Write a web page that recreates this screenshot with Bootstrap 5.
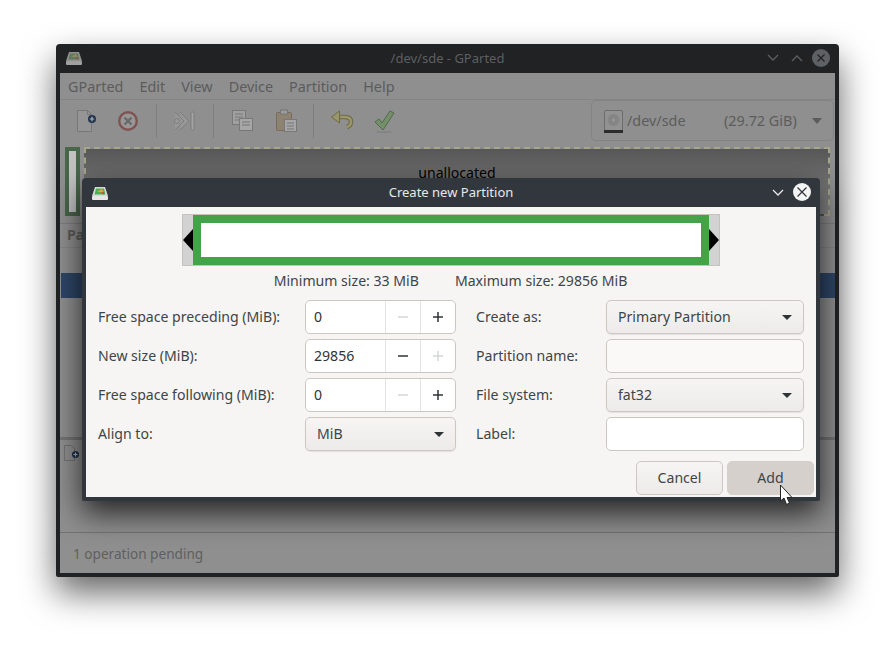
<!DOCTYPE html>
<html lang="en">
<head>
  <meta charset="UTF-8" />
  <title>Create new Partition - GParted</title>
  <link href="https://cdn.jsdelivr.net/npm/bootstrap@5.3.0/dist/css/bootstrap.min.css" rel="stylesheet" />
  <style>
    body { background: #fff; font-family: "Noto Sans", sans-serif; font-size: 14.1px; overflow: hidden; }
    .desk { position: relative; width: 895px; height: 645px; }

    /* main window, dimmed while the dialog is open */
    .main-win { position: absolute; left: 56px; top: 44px; width: 783px; height: 533px; background: #202224; border-radius: 4px 4px 2px 2px; box-shadow: 0 16px 34px rgba(0,0,0,.6); color: #5c5c5c; }
    .main-title { height: 29px; padding: 0 9px; color: #5d5f61; }
    .main-title .ttl { left: 0; right: 0; top: 5px; text-align: center; position: absolute; font-size: 13px; }
    .main-body { position: absolute; left: 4px; right: 4px; top: 29px; bottom: 4px; background: #8f8f8f; }
    .menu-strip { height: 27px; padding: 1px 0 0 8px; gap: 16px; border-bottom: 1px solid #858585; font-size: 14.4px; }
    .tool-strip { height: 44px; position: relative; }
    .tool-ico { position: absolute; top: 10px; }
    .tool-sep { position: absolute; top: 4px; width: 1px; height: 34px; background: #7f7f7f; }
    .disk-combo { position: absolute; left: 531px; top: 0; width: 243px; height: 41px; border: 1px solid #838383; border-radius: 5px; font-size: 14.4px; }
    .disk-combo span { position: absolute; top: 9px; }
    .graph-strip { position: absolute; left: 5px; right: 5px; top: 74px; height: 69px; }
    .part-used { position: absolute; left: 0; top: 0; width: 15px; height: 69px; border: 4px solid #47664a; background: #c2c2c2; }
    .part-free { position: absolute; left: 19px; right: 0; top: 0; height: 69px; border: 2px dashed #a5a58c; background: linear-gradient(#575757, #8a8a8a); color: #000; text-align: center; padding-top: 13px; }
    .head-strip { position: absolute; left: 0; right: 0; top: 150px; height: 25px; border-top: 1px solid #7e7e7e; border-bottom: 1px solid #858585; font-weight: 700; padding: 0 7px; color: #5c5c5c; }
    .sel-row { position: absolute; left: 1px; right: 0; top: 200px; height: 25px; background: #2e4666; }
    .ops-strip { position: absolute; left: 0; right: 0; top: 364px; height: 96px; border-top: 3px solid #747474; border-bottom: 1px solid #737373; }
    .stat-strip { position: absolute; left: 13px; top: 471px; color: #5f5f5f; font-size: 13.6px; }

    /* dialog */
    .dlg-win { position: absolute; left: 82px; top: 178px; width: 738px; height: 323px; background: #32373d; border-radius: 4px 4px 2px 2px; box-shadow: 0 12px 30px rgba(0,0,0,.75); }
    .dlg-title { height: 29px; position: relative; color: #e8e8e8; font-size: 13px; }
    .dlg-title .ttl { position: absolute; left: 0; right: 0; top: 5px; text-align: center; }
    .dlg-close { position: absolute; right: 9px; top: 5px; width: 18px; height: 18px; border-radius: 50%; background: #f4f4f4; }
    .dlg-body { position: absolute; left: 4px; right: 4px; top: 29px; bottom: 4px; background: #f6f5f4; color: #3f4446; }
    .bar-wrap { position: relative; width: 538px; height: 52px; margin: 7px 0 0 96px; background: #d2d2d2; border: 1px solid #c6c3bd; }
    .bar-fill { position: absolute; left: 10px; right: 10px; top: 0; bottom: 0; border: 8px solid #44a248; background: #fff; }
    .bar-grip { position: absolute; top: 14px; }
    .size-line { justify-content: center; gap: 36px; margin: 5px 0 0 0; height: 20px; line-height: 20px; padding-right: 1px; }
    .form-area { padding: 9px 12px 0 12px; }
    .left-col { width: 358px; }
    .right-col { width: 328px; margin-left: 20px; }
    .rowline { height: 34px; margin-bottom: 5px; }
    .rowline label { margin: 0; }
    .spin-box { width: 151px; height: 34px; border: 1px solid #cdc7c2; border-radius: 5px; background: #fff; color: #2e3436; overflow: hidden; }
    .spin-val { width: 80px; padding-left: 8px; line-height: 32px; }
    .spin-btn { width: 35px; border-left: 1px solid #e6e3e0; display: flex; align-items: center; justify-content: center; }
    .combo-btn { height: 34px; border: 1px solid #cdc7c2; border-radius: 5px; background: linear-gradient(#f6f5f4, #edebe9); color: #3f4446; padding: 0 11px; font-size: 14.1px; box-shadow: 0 1px 1px rgba(0,0,0,.08); }
    .w-left { width: 151px; }
    .w-right { width: 198px; }
    .text-box { width: 198px; height: 34px; border: 1px solid #cdc7c2; border-radius: 5px; padding: 0 8px; font-size: 14px; }
    .text-box.off { background: #faf9f8; }
    .text-box.on { background: #fff; }
    .act-line { position: absolute; right: 2px; top: 254px; gap: 4px; }
    .act-btn { width: 87px; height: 34px; padding: 0 0 1px; font-size: 14.1px; border: 1px solid #cdc7c2; border-radius: 5px; color: #3f4446; background: linear-gradient(#f6f5f4, #edebe9); }
    .act-btn.hot { background: #d5d0cc; border-color: #d5d0cc; }
    .ptr { position: absolute; left: 779px; top: 484px; }
  </style>
</head>
<body>
  <div class="desk">
    <div class="main-win">
      <div class="main-title d-flex align-items-center">
        <svg width="18" height="15" viewBox="0 0 18 15"><path d="M4 1h10l3 9H1z" fill="#8f8f8f"/><path d="M5 2.500h8l1.500 6h-11z" fill="#5d7a5f"/><path d="M6 5.500l5-2.500 2 4z" fill="#8d8a60"/><path d="M9.500 6l3.500 0.500 0 2z" fill="#8a4c44"/><rect x="1" y="10" width="16" height="4" rx="1" fill="#a0a0a0"/></svg>
        <div class="ttl">/dev/sde - GParted</div>
        <svg class="position-absolute" style="left:711px;top:10px" width="12" height="8" viewBox="0 0 12 8"><path d="M1 1l5 5 5-5" fill="none" stroke="#5d5f61" stroke-width="1.300"/></svg>
        <svg class="position-absolute" style="left:735px;top:10px" width="12" height="8" viewBox="0 0 12 8"><path d="M1 7l5-5 5 5" fill="none" stroke="#5d5f61" stroke-width="1.300"/></svg>
        <svg class="position-absolute" style="left:756px;top:5px" width="18" height="18" viewBox="0 0 18 18"><circle cx="9" cy="9" r="9" fill="#5d6163"/><path d="M5.500 5.500l7 7M12.500 5.500l-7 7" stroke="#222" stroke-width="1.300"/></svg>
      </div>
      <div class="main-body">
        <div class="menu-strip d-flex align-items-center">
          <span>GParted</span><span>Edit</span><span>View</span><span>Device</span><span>Partition</span><span>Help</span>
        </div>
        <div class="tool-strip">
          <svg class="tool-ico" style="left:17px" width="20" height="22" viewBox="0 0 20 22"><path d="M0.500 0.500h10l4 4v17h-14z" fill="#959595" stroke="#777"/><path d="M10.500 0.500v4h4" fill="none" stroke="#777"/><circle cx="15" cy="9" r="4" fill="#22354e"/><path d="M12.800 9h4.400M15 6.800v4.400" stroke="#b5b5b5" stroke-width="1.200"/></svg>
          <svg class="tool-ico" style="left:57px;top:11px" width="22" height="22" viewBox="0 0 22 22"><circle cx="11" cy="10" r="8.800" fill="#979797" stroke="#7d5451" stroke-width="2.400"/><path d="M7.500 6.500l7 7M14.500 6.500l-7 7" stroke="#696969" stroke-width="2.400"/></svg>
          <div class="tool-sep" style="left:96px"></div>
          <svg class="tool-ico" style="left:113px;top:10px" width="22" height="22" viewBox="0 0 22 22"><path d="M2 2l9 9-9 9M7 2l9 9-9 9" fill="#979797" stroke="#7d7d7d"/><circle cx="4" cy="11" r="2.500" fill="#9a9a9a" stroke="#7d7d7d"/><rect x="18" y="2" width="3" height="18" rx="1" fill="#a3a3a3" stroke="#7d7d7d"/></svg>
          <div class="tool-sep" style="left:153px"></div>
          <svg class="tool-ico" style="left:172px" width="21" height="22" viewBox="0 0 21 22"><rect x="0.500" y="0.500" width="13" height="14" fill="#a0a0a0" stroke="#787878"/><path d="M3 4h8M3 7h8M3 10h5" stroke="#767676"/><rect x="7.500" y="8.500" width="13" height="12" fill="#a6a6a6" stroke="#787878"/><path d="M10 12h8M10 15h8" stroke="#767676"/></svg>
          <svg class="tool-ico" style="left:216px;top:9px" width="21" height="24" viewBox="0 0 21 24"><rect x="0.500" y="3.500" width="15" height="18" rx="1" fill="#8e8270" stroke="#766c5c"/><rect x="4.500" y="1" width="7" height="4" fill="#9b9b9b" stroke="#777"/><rect x="8.500" y="10.500" width="12" height="12" fill="#a6a6a6" stroke="#787878"/><path d="M11 14h7M11 17h7M11 20h7" stroke="#767676"/></svg>
          <div class="tool-sep" style="left:253px"></div>
          <svg class="tool-ico" style="left:270px;top:10px" width="24" height="20" viewBox="0 0 24 20"><path d="M7 7h8c4 0 6 2 6 5 0 2-1 4-4 5" fill="none" stroke="#6c6a48" stroke-width="4.500"/><path d="M7 7h8c4 0 6 2 6 5 0 2-1 4-4 5" fill="none" stroke="#9b9668" stroke-width="2.500"/><path d="M1.500 7l8-6v12z" fill="#9b9668" stroke="#6c6a48"/></svg>
          <svg class="tool-ico" style="left:314px;top:9px" width="22" height="24" viewBox="0 0 22 24"><path d="M1 13l4-3 3 4L16 2l4 2-11 17z" fill="#74906a" stroke="#526a4a"/><ellipse cx="10" cy="23" rx="8" ry="1" fill="#848484"/></svg>
          <div class="disk-combo">
            <svg class="position-absolute" style="left:12px;top:9px" width="19" height="23" viewBox="0 0 19 23"><rect x="0.500" y="0.500" width="18" height="21" rx="1.500" fill="#929292" stroke="#6c6c6c"/><circle cx="9.500" cy="10" r="6" fill="#858585"/><circle cx="9.500" cy="10" r="1.500" fill="#9a9a9a"/><rect y="20" width="19" height="3" fill="#2c2c2c"/></svg>
            <span style="left:35px">/dev/sde</span>
            <span style="left:132px">(29.72 GiB)</span>
            <svg class="position-absolute" style="left:220px;top:17px" width="10" height="6" viewBox="0 0 10 6"><path d="M0 0h10L5 6z" fill="#5c5c5c"/></svg>
          </div>
        </div>
        <div class="graph-strip">
          <div class="part-used"></div>
          <div class="part-free">unallocated</div>
        </div>
        <div class="head-strip">Partition</div>
        <div class="sel-row"></div>
        <div class="ops-strip">
          <svg class="position-absolute" style="left:4px;top:5px" width="17" height="17" viewBox="0 0 17 17"><path d="M0.500 0.500h7l3 3v12h-10z" fill="#8f8f8f" stroke="#727272"/><circle cx="11.500" cy="9.500" r="3.600" fill="#22354e"/><path d="M9.500 9.500h4M11.500 7.500v4" stroke="#b5b5b5"/></svg>
        </div>
        <div class="stat-strip">1 operation pending</div>
      </div>
    </div>

    <div class="dlg-win">
      <div class="dlg-title">
        <svg class="position-absolute" style="left:9px;top:8px" width="18" height="15" viewBox="0 0 18 15"><path d="M4 1h10l3 9H1z" fill="#d8d8d8"/><path d="M5 2.500h8l1.500 6h-11z" fill="#4caf50"/><path d="M6 5.500l5-2.500 2 4z" fill="#e8a33a"/><path d="M9.500 6l3.500 0.500 0 2z" fill="#d9362c"/><rect x="1" y="10" width="16" height="4" rx="1" fill="#e6e6e6"/></svg>
        <div class="ttl">Create new Partition</div>
        <svg class="position-absolute" style="left:690px;top:11px" width="12" height="8" viewBox="0 0 12 8"><path d="M1 1l5 5 5-5" fill="none" stroke="#e8e8e8" stroke-width="1.300"/></svg>
        <div class="dlg-close d-flex align-items-center justify-content-center">
          <svg width="12" height="12" viewBox="0 0 12 12"><path d="M1.500 1.500l9 9M10.500 1.500l-9 9" stroke="#32373d" stroke-width="1.300"/></svg>
        </div>
      </div>
      <div class="dlg-body">
        <div class="bar-wrap">
          <div class="bar-fill"></div>
          <svg class="bar-grip" style="left:0" width="10" height="22" viewBox="0 0 10 22"><path d="M10 0v22L0 11z" fill="#000"/></svg>
          <svg class="bar-grip" style="right:0" width="10" height="22" viewBox="0 0 10 22"><path d="M0 0v22l10-11z" fill="#000"/></svg>
        </div>
        <div class="size-line d-flex">
          <span>Minimum size: 33 MiB</span><span>Maximum size: 29856 MiB</span>
        </div>
        <div class="form-area d-flex">
          <div class="left-col">
            <div class="rowline d-flex align-items-center justify-content-between">
              <label>Free space preceding (MiB):</label>
              <div class="spin-box d-flex"><div class="spin-val">0</div>
                <div class="spin-btn"><svg width="12" height="12" viewBox="0 0 12 12"><path d="M1 6h10" stroke="#d4d6d6" stroke-width="1.500"/></svg></div>
                <div class="spin-btn"><svg width="12" height="12" viewBox="0 0 12 12"><path d="M1 6h10M6 1v10" stroke="#2e3436" stroke-width="1.500"/></svg></div>
              </div>
            </div>
            <div class="rowline d-flex align-items-center justify-content-between">
              <label>New size (MiB):</label>
              <div class="spin-box d-flex"><div class="spin-val">29856</div>
                <div class="spin-btn"><svg width="12" height="12" viewBox="0 0 12 12"><path d="M1 6h10" stroke="#2e3436" stroke-width="1.500"/></svg></div>
                <div class="spin-btn"><svg width="12" height="12" viewBox="0 0 12 12"><path d="M1 6h10M6 1v10" stroke="#d4d6d6" stroke-width="1.500"/></svg></div>
              </div>
            </div>
            <div class="rowline d-flex align-items-center justify-content-between">
              <label>Free space following (MiB):</label>
              <div class="spin-box d-flex"><div class="spin-val">0</div>
                <div class="spin-btn"><svg width="12" height="12" viewBox="0 0 12 12"><path d="M1 6h10" stroke="#d4d6d6" stroke-width="1.500"/></svg></div>
                <div class="spin-btn"><svg width="12" height="12" viewBox="0 0 12 12"><path d="M1 6h10M6 1v10" stroke="#2e3436" stroke-width="1.500"/></svg></div>
              </div>
            </div>
            <div class="rowline d-flex align-items-center justify-content-between">
              <label>Align to:</label>
              <button class="btn combo-btn w-left d-flex align-items-center justify-content-between">MiB <svg width="10" height="5" viewBox="0 0 10 5"><path d="M0 0h10L5 5z" fill="#2e3436"/></svg></button>
            </div>
          </div>
          <div class="right-col">
            <div class="rowline d-flex align-items-center justify-content-between">
              <label>Create as:</label>
              <button class="btn combo-btn w-right d-flex align-items-center justify-content-between">Primary Partition <svg width="10" height="5" viewBox="0 0 10 5"><path d="M0 0h10L5 5z" fill="#2e3436"/></svg></button>
            </div>
            <div class="rowline d-flex align-items-center justify-content-between">
              <label>Partition name:</label>
              <input class="text-box off" type="text" disabled>
            </div>
            <div class="rowline d-flex align-items-center justify-content-between">
              <label>File system:</label>
              <button class="btn combo-btn w-right d-flex align-items-center justify-content-between">fat32 <svg width="10" height="5" viewBox="0 0 10 5"><path d="M0 0h10L5 5z" fill="#2e3436"/></svg></button>
            </div>
            <div class="rowline d-flex align-items-center justify-content-between">
              <label>Label:</label>
              <input class="text-box on" type="text">
            </div>
          </div>
        </div>
        <div class="act-line d-flex">
          <button class="btn act-btn">Cancel</button>
          <button class="btn act-btn hot">Add</button>
        </div>
      </div>
    </div>

    <svg class="ptr" width="14" height="23" viewBox="0 0 14 23"><path d="M1.500 1v16l3.500-3 2.500 6.500 3-1.500-2.500-5.500h5z" fill="#fff" stroke="#222" stroke-width="1"/></svg>
  </div>
  <script src="https://cdn.jsdelivr.net/npm/bootstrap@5.3.0/dist/js/bootstrap.bundle.min.js"></script>
</body>
</html>
